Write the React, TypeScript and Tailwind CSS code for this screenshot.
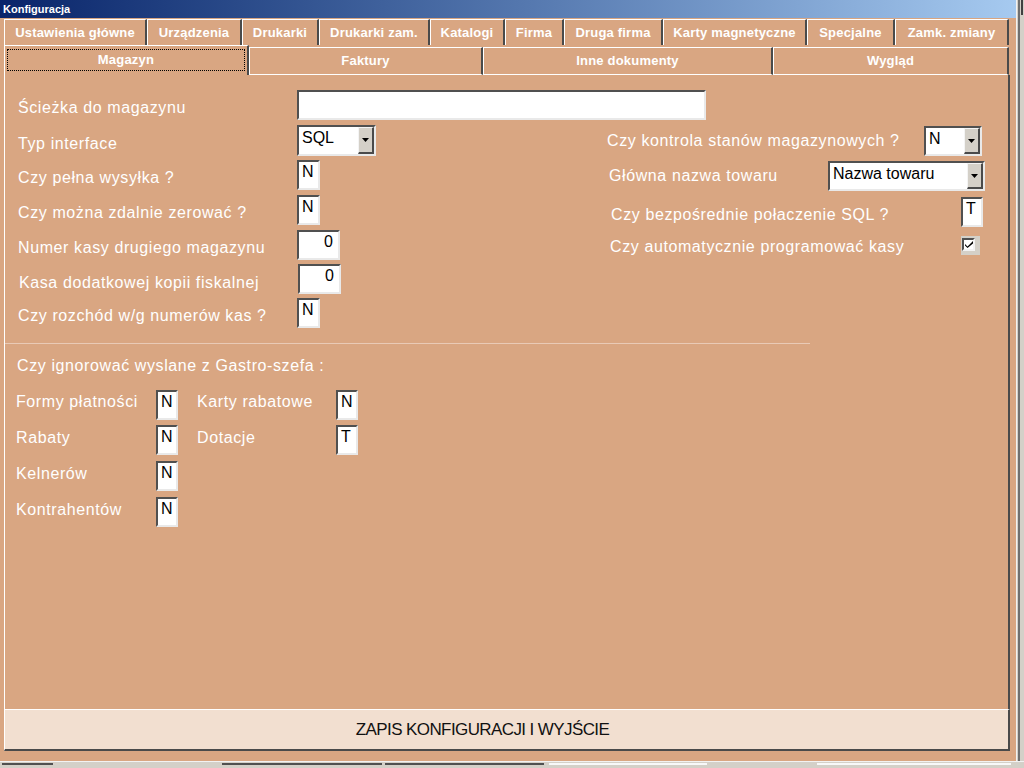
import React from "react";

const tabsTop = [
  { label: "Ustawienia główne", w: "w-[143px]" },
  { label: "Urządzenia", w: "w-[95px]" },
  { label: "Drukarki", w: "w-[77px]" },
  { label: "Drukarki zam.", w: "w-[111px]" },
  { label: "Katalogi", w: "w-[75px]" },
  { label: "Firma", w: "w-[59px]" },
  { label: "Druga firma", w: "w-[99px]" },
  { label: "Karty magnetyczne", w: "w-[144px]" },
  { label: "Specjalne", w: "w-[88px]" },
  { label: "Zamk. zmiany", w: "w-[114px]" },
];

const tabsBottom = [
  { label: "Faktury", w: "w-[234px]" },
  { label: "Inne dokumenty", w: "w-[290px]" },
  { label: "Wygląd", w: "w-[236px]" },
];

const sunken =
  "border-2 border-t-[#505050] border-l-[#505050] border-b-[#e9e9e9] border-r-[#e9e9e9] bg-white";
const label = "text-white text-[16px] leading-[20px] tracking-[0.6px] whitespace-nowrap";
const value = "text-black text-[16px] leading-[20px]";

function Box({ v, w = "w-[23px]", right = false }: { v: string; w?: string; right?: boolean }) {
  return (
    <div className={`${sunken} ${w} h-[30px] flex-none flex ${right ? "justify-end pr-[5px]" : "pl-[3px]"}`}>
      <span className={value}>{v}</span>
    </div>
  );
}

function Select({ v, w, h = "h-[30px]" }: { v: string; w: string; h?: string }) {
  return (
    <div className={`${sunken} ${w} ${h} flex-none flex`}>
      <span className={`${value} flex-1 pl-[3px] pt-[1px]`}>{v}</span>
      <div className="w-[16px] h-full flex items-center justify-center bg-[#d4d0c8] border-t border-l border-t-[#f4f4f4] border-l-[#f4f4f4] border-b-2 border-r-2 border-b-[#4a4a4a] border-r-[#4a4a4a]">
        <svg width="7" height="4" viewBox="0 0 7 4">
          <path d="M0 0h7L3.5 4z" fill="#000" />
        </svg>
      </div>
    </div>
  );
}

function LeftRow({ text, mt, children, pl = "" }: { text: string; mt: string; children: React.ReactNode; pl?: string }) {
  return (
    <div className={`flex items-center ${mt} ${pl}`}>
      <div className={`${label} w-[279px] flex-none pt-[6px]`}>{text}</div>
      {children}
    </div>
  );
}

function RightRow({ text, mt, ml, mr, pt = "", children }: { text: string; mt: string; ml: string; mr: string; pt?: string; children: React.ReactNode }) {
  return (
    <div className={`flex items-center justify-between h-[30px] ${mt} ${ml} ${mr}`}>
      <div className={`${label} ${pt}`}>{text}</div>
      {children}
    </div>
  );
}

function SmallRow({ a, av, b, bv, mt, pt }: { a: string; av: string; b?: string; bv?: string; mt: string; pt: string }) {
  return (
    <div className={`flex items-start h-[30px] ${mt}`}>
      <div className={`${label} w-[140px] flex-none ${pt}`}>{a}</div>
      <Box v={av} w="w-[22px]" />
      {b && (
        <>
          <div className={`${label} w-[139px] flex-none ml-[19px] ${pt}`}>{b}</div>
          <Box v={bv ?? ""} w="w-[22px]" />
        </>
      )}
    </div>
  );
}

export default function App() {
  return (
    <div className="w-[1024px] h-[768px] bg-[#d4d0c8] overflow-hidden font-['Liberation_Sans',Arial,sans-serif]">
      <div className="flex">
        {/* window */}
        <div className="w-[1016px] h-[761px] flex flex-col bg-[#d9a682]">
          <div className="h-[18px] flex-none bg-gradient-to-r from-[#0a246a] to-[#a6caf0] pl-[3px] text-white text-[11px] font-bold leading-[18px]">
            Konfiguracja
          </div>

          {/* tab row 1 */}
          <div className="flex h-[27px] pt-[1px] ml-[4px] flex-none">
            {tabsTop.map((t) => (
              <div
                key={t.label}
                className={`${t.w} h-[26px] flex-none flex items-center justify-center border-t border-l border-white border-r-2 border-r-[#4a4a4a] text-white text-[13px] font-bold tracking-[0.2px] whitespace-nowrap`}
              >
                {t.label}
              </div>
            ))}
          </div>

          {/* tab row 2 */}
          <div className="flex h-[30px] ml-[4px] flex-none">
            <div className="w-[245px] h-[30px] flex-none border-t border-l border-white border-r-2 border-r-[#4a4a4a] pt-[3px] pl-[2px] pr-[2px] pb-[4px]">
              <div className="h-full border border-dotted border-black flex items-center justify-center text-white text-[13px] font-bold tracking-[0.2px]">
                Magazyn
              </div>
            </div>
            {tabsBottom.map((t) => (
              <div
                key={t.label}
                className={`${t.w} h-[28px] mt-[2px] flex-none flex items-center justify-center border-t border-l border-b border-white border-r-2 border-r-[#4a4a4a] text-white text-[13px] font-bold tracking-[0.2px]`}
              >
                {t.label}
              </div>
            ))}
          </div>

          {/* panel */}
          <div className="flex-1 ml-[4px] w-[1006px] border-l border-white border-r-2 border-r-[#4a4a4a] pt-[15px]">
            <div className="flex items-center h-[30px] pl-[13px]">
              <div className={`${label} w-[279px] flex-none pt-[6px]`}>Ścieżka do magazynu</div>
              <div className={`${sunken} w-[409px] h-[30px]`} />
            </div>

            <div className="flex mt-[5px]">
              <div className="w-[602px] flex-none pl-[13px]">
                <LeftRow text="Typ interface" mt="">
                  <Select v="SQL" w="w-[79px]" h="h-[31px]" />
                </LeftRow>
                <LeftRow text="Czy pełna wysyłka ?" mt="mt-[4px]">
                  <Box v="N" />
                </LeftRow>
                <LeftRow text="Czy można zdalnie zerować ?" mt="mt-[5px]">
                  <Box v="N" />
                </LeftRow>
                <LeftRow text="Numer kasy drugiego magazynu" mt="mt-[5px]">
                  <Box v="0" w="w-[43px]" right />
                </LeftRow>
                <LeftRow text="Kasa dodatkowej kopii fiskalnej" mt="mt-[4px]" pl="pl-[1px]">
                  <div className="h-[31px] flex">
                    <Box v="0" w="w-[43px]" right />
                  </div>
                </LeftRow>
                <LeftRow text="Czy rozchód w/g numerów kas ?" mt="mt-[3px]">
                  <Box v="N" />
                </LeftRow>
              </div>

              <div className="w-[378px] flex-none">
                <RightRow text="Czy kontrola stanów magazynowych ?" mt="mt-[1px]" ml="" mr="mr-[3px]">
                  <Select v="N" w="w-[58px]" />
                </RightRow>
                <RightRow text="Główna nazwa towaru" mt="mt-[5px]" ml="ml-[2px]" mr="">
                  <Select v="Nazwa towaru" w="w-[157px]" />
                </RightRow>
                <RightRow text="Czy bezpośrednie połaczenie SQL ?" mt="mt-[6px]" ml="ml-[4px]" mr="mr-[2px]" pt="pt-[5px]">
                  <Box v="T" w="w-[22px]" />
                </RightRow>
                <RightRow text="Czy automatycznie programować kasy" mt="mt-[5px]" ml="ml-[3px]" mr="mr-[5px]">
                  <div className="w-[19px] h-[19px] mb-[3px] bg-[#d4d0c8] pl-[1px] pt-[2px]">
                    <div className="w-[13px] h-[13px] border-2 border-t-[#505050] border-l-[#505050] border-b-[#f2f2f2] border-r-[#f2f2f2] bg-white flex items-center justify-center">
                      <svg width="8" height="7" viewBox="0 0 8 7">
                        <path d="M0 3l2.5 2.5L8 0v2.5L2.5 7 0 4.5z" fill="#000" />
                      </svg>
                    </div>
                  </div>
                </RightRow>
              </div>
            </div>

            <div className="mt-[15px] h-px w-[805px] bg-[#e9cab6]" />

            <div className={`${label} mt-[12px] pl-[12px]`}>Czy ignorować wyslane z Gastro-szefa :</div>

            <div className="mt-[14px] pl-[11px]">
              <SmallRow a="Formy płatności" av="N" b="Karty rabatowe" bv="N" mt="" pt="pt-[2px]" />
              <SmallRow a="Rabaty" av="N" b="Dotacje" bv="T" mt="mt-[5px]" pt="pt-[3px]" />
              <SmallRow a="Kelnerów" av="N" mt="mt-[6px]" pt="pt-[3px]" />
              <SmallRow a="Kontrahentów" av="N" mt="mt-[6px]" pt="pt-[3px]" />
            </div>
          </div>

          {/* save button */}
          <div className="ml-[4px] w-[1006px] h-[42px] flex-none bg-[#f2dfd0] border-t border-l border-white border-b-2 border-r-2 border-b-[#4a4a4a] border-r-[#4a4a4a] flex items-center justify-center pr-[48px] text-[17px] text-[#111] tracking-[-0.6px] mb-[10px]">
            ZAPIS KONFIGURACJI I WYJŚCIE
          </div>
        </div>

        {/* right edge */}
        <div className="w-[8px] h-[761px] border-l border-l-[#f2f2f2] bg-[#d4d0c8]">
          <div className="h-full ml-[1px] border-l-2 border-l-[#707070] flex">
            <div className="ml-[1px] w-[2px] h-[15px] bg-[#404040]" />
          </div>
        </div>
      </div>

      {/* bottom edge */}
      <div className="h-[7px] border-t border-t-[#f2f2f2] flex items-start pt-[1px]">
        <div className="w-[51px] ml-[2px] h-[2px] bg-[#505050]" />
        <div className="w-[160px] ml-[169px] h-[2px] bg-[#505050]" />
        <div className="w-[159px] ml-[3px] h-[2px] bg-[#505050]" />
        <div className="w-[158px] ml-[5px] h-[2px] bg-[#f8f8f8]" />
        <div className="w-[194px] ml-[110px] h-[2px] bg-[#f8f8f8]" />
      </div>
    </div>
  );
}
